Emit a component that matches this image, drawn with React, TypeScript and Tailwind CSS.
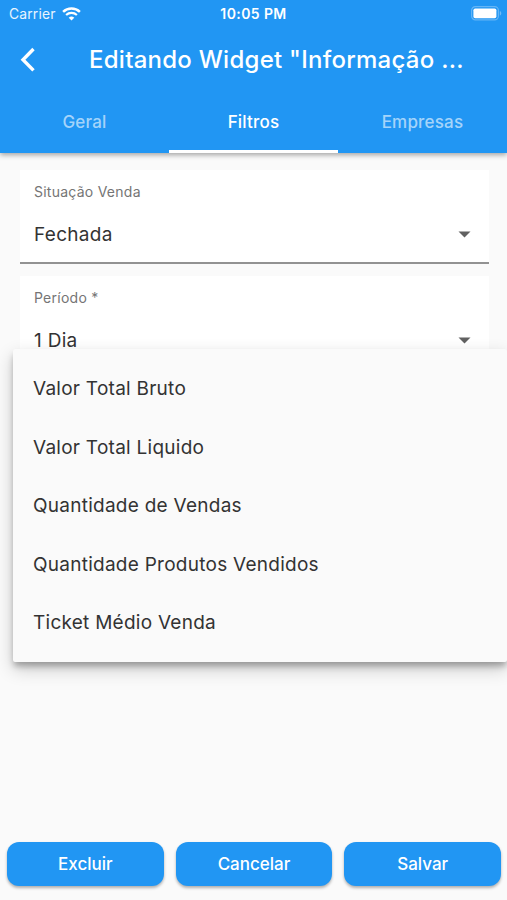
import clsx from 'clsx';

const tabs = ['Geral', 'Filtros', 'Empresas'];

const menuItems = [
  'Valor Total Bruto',
  'Valor Total Liquido',
  'Quantidade de Vendas',
  'Quantidade Produtos Vendidos',
  'Ticket Médio Venda',
];

const actions = ['Excluir', 'Cancelar', 'Salvar'];

function WifiIcon() {
  return (
    <svg width="19" height="14" viewBox="0 0 19 14" aria-hidden="true">
      <g fill="none" stroke="white">
        <path d="M1.1 4.8a12.2 12.2 0 0 1 16.8 0" strokeWidth="2.5" />
        <path d="M4.1 8a7.9 7.9 0 0 1 10.800 0" strokeWidth="2.2" />
      </g>
      <path d="M9.5 13.6 6.700 10.800a4.200 4.200 0 0 1 5.600 0z" fill="white" />
    </svg>
  );
}

function BatteryIcon() {
  return (
    <svg width="31" height="15" viewBox="0 0 31 15" fill="none" aria-hidden="true">
      <rect x="0.6" y="0.6" width="26.8" height="13.3" rx="3.8" stroke="white" strokeOpacity="0.3" strokeWidth="1.2" />
      <rect x="2.4" y="2.4" width="23" height="9.8" rx="1.8" fill="white" />
      <path d="M28.8 5v4.6c.9-.4 1.5-1.2 1.5-2.3S29.7 5.4 28.8 5z" fill="white" fillOpacity="0.35" />
    </svg>
  );
}

function StatusBar() {
  return (
    <div className="grid h-[27px] grid-cols-3 items-center text-white">
      <div className="flex items-center gap-[6px] pl-[9px]">
        <span className="pt-px text-[13.8px] tracking-[0.2px] text-white/90">Carrier</span>
        <WifiIcon />
      </div>
      <span className="text-center text-[14px] font-semibold tracking-[0.4px]">10:05 PM</span>
      <div className="flex justify-end pr-[5px]">
        <BatteryIcon />
      </div>
    </div>
  );
}

/**
 * Filled select with a floating label and an underline.
 */
function SelectField({ label, value }: { label: string; value: string }) {
  return (
    <div className="h-[94px] border-b-2 border-[#929292] bg-white pl-[14px] pr-[18px] pt-[12px]">
      <div className="text-[14px] leading-[20px] tracking-[0.25px] text-[#757575]">{label}</div>
      <div className="mt-[19px] flex items-center justify-between">
        <span className="text-[19px] leading-[28px] tracking-[0.3px] text-[#333]">{value}</span>
        <svg className="mb-px" width="13" height="7" viewBox="0 0 13 7" aria-hidden="true">
          <path d="M0.5 0.5h12l-6 6z" fill="#616161" />
        </svg>
      </div>
    </div>
  );
}

export default function App() {
  return (
    <div className="relative flex h-[900px] w-[507px] flex-col overflow-hidden bg-[#fafafa] font-['Inter','Liberation_Sans',sans-serif]">
      <header className="z-10 h-[153px] shrink-0 bg-[#2196f3] text-white shadow-[0_2px_5px_rgba(0,0,0,0.35)]">
        <StatusBar />
        <div className="flex h-[66px] items-center pl-[19px]">
          <svg width="17" height="26" viewBox="0 0 17 26" fill="none" aria-hidden="true">
            <path d="M14.5 2 4 12.7l10.5 10.7" stroke="white" strokeWidth="3.4" />
          </svg>
          <h1 className="ml-[53px] whitespace-nowrap text-[24px] font-medium tracking-[0.26px]">
            Editando Widget "Informação ...
          </h1>
        </div>
        <nav className="grid h-[60px] grid-cols-3">
          {tabs.map((tab) => (
            <button
              key={tab}
              className={clsx(
                'border-b-[3px] pt-[2px] text-[17px] font-medium tracking-[0.2px]',
                tab === 'Filtros' ? 'border-white text-white' : 'border-transparent text-white/60'
              )}
            >
              {tab}
            </button>
          ))}
        </nav>
      </header>

      <main className="flex flex-1 flex-col gap-[12px] pl-[20px] pr-[18px] pt-[17px]">
        <SelectField label="Situação Venda" value="Fechada" />
        <SelectField label="Período *" value="1 Dia" />
      </main>

      {/* Open dropdown menu, floats over the form */}
      <ul className="absolute left-[13px] right-0 top-[349px] rounded-[2px] bg-[#fafafa] pb-[9px] pt-[11px] shadow-[0_5px_6px_-1px_rgba(0,0,0,0.28),0_7px_18px_rgba(0,0,0,0.2)]">
        {menuItems.map((item) => (
          <li key={item} className="flex h-[58.6px] items-center pl-[20px] text-[19px] tracking-[0.26px] text-[#333]">
            {item}
          </li>
        ))}
      </ul>

      <footer className="grid grid-cols-3 gap-[12px] pb-[14px] pl-[7px] pr-[6px]">
        {actions.map((action) => (
          <button
            key={action}
            className="h-[44px] rounded-[12px] bg-[#2196f3] pt-[2px] text-[17px] font-medium text-white shadow-[0_2px_3px_rgba(0,0,0,0.3)]"
          >
            {action}
          </button>
        ))}
      </footer>
    </div>
  );
}
